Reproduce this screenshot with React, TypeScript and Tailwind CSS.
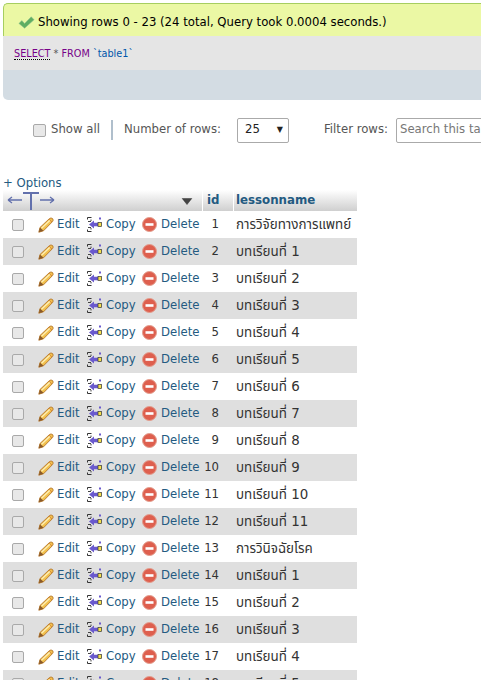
const font = { fontFamily: '"DejaVu Sans", "Noto Sans Thai", "Noto Sans", sans-serif' };

function Pencil() {
  return (
    <svg width="16" height="16" viewBox="0 0 16 16" className="shrink-0">
      <path d="M0.8 15.2 L2 10.5 L11.5 1.5 Q13 0.4 14.6 1.6 Q15.8 3.2 14.5 4.6 L5.5 13.8 Z" fill="#f2c14e" stroke="#b5762a" strokeWidth="0.9" />
      <path d="M0.8 15.2 L2 10.5 L5.5 13.8 Z" fill="#8a5a2a" />
      <path d="M3.5 11.2 L12 3.2" stroke="#fdeeb5" strokeWidth="1.3" />
      <path d="M11 2.2 L14 5" stroke="#d98a3a" strokeWidth="1" />
    </svg>
  );
}

function CopyIcon() {
  return (
    <svg width="15" height="17" viewBox="0 0 15 17" className="shrink-0">
      <path d="M4.5 1.5 H0.5 V3.5 M0.5 13.5 V15.5 H4.5" fill="none" stroke="#333" strokeWidth="1" />
      <path d="M1 5.5 H4 M1 11.5 H4 M4 3.5 V5 M4 12 V13.5" fill="none" stroke="#444" strokeWidth="1" />
      <path d="M2 8.5 L7 4.5 V6.8 H11 V10.2 H7 V12.5 Z" fill="#6a5acd" />
      <rect x="11" y="6.5" width="3.5" height="4" fill="#f5e04a" stroke="#333" strokeWidth="0.7" />
      <rect x="12" y="1.5" width="2" height="2" fill="#6a5acd" />
    </svg>
  );
}

function DeleteIcon() {
  return (
    <svg width="15" height="15" viewBox="0 0 15 15" className="shrink-0">
      <circle cx="7.5" cy="7.5" r="7" fill="#de5f4e" stroke="#e29c8c" />
      <rect x="3.5" y="6.2" width="8" height="2.6" fill="#fff" />
    </svg>
  );
}

function ColDrag() {
  return (
    <svg width="54" height="21" viewBox="0 0 54 21" className="shrink-0">
      <path d="M5 10 H19 M5 10 L9 7 M5 10 L9 13" stroke="#6270ac" strokeWidth="1.3" fill="none" />
      <path d="M20 3 H36 M28 3 V20" stroke="#6270ac" strokeWidth="2" fill="none" />
      <path d="M37 10 H51 M51 10 L47 7 M51 10 L47 13" stroke="#6270ac" strokeWidth="1.3" fill="none" />
    </svg>
  );
}

const rows: [number, string][] = [
  [1, "การวิจัยทางการแพทย์"],
  [2, "บทเรียนที่ 1"],
  [3, "บทเรียนที่ 2"],
  [4, "บทเรียนที่ 3"],
  [5, "บทเรียนที่ 4"],
  [6, "บทเรียนที่ 5"],
  [7, "บทเรียนที่ 6"],
  [8, "บทเรียนที่ 7"],
  [9, "บทเรียนที่ 8"],
  [10, "บทเรียนที่ 9"],
  [11, "บทเรียนที่ 10"],
  [12, "บทเรียนที่ 11"],
  [13, "การวินิจฉัยโรค"],
  [14, "บทเรียนที่ 1"],
  [15, "บทเรียนที่ 2"],
  [16, "บทเรียนที่ 3"],
  [17, "บทเรียนที่ 4"],
  [18, "บทเรียนที่ 5"],
];

function Row({ id, name, even }: { id: number; name: string; even: boolean }) {
  return (
    <div className={`flex h-[27px] w-[354px] items-center whitespace-nowrap pt-[1px] text-[11.7px] text-[#333] ${even ? "bg-[#dfdfdf]" : "bg-white"}`}>
      <div className="flex w-[30px] shrink-0 justify-center">
        <span className="h-[12px] w-[12px] rounded-[2px] border border-[#a9a9a9] bg-[#e8e8e8]" />
      </div>
      <span className="ml-[5px] flex w-[49px] shrink-0 items-center gap-[3px] text-[#235a81]">
        <Pencil />
        <span>Edit</span>
      </span>
      <span className="flex w-[55px] shrink-0 items-center gap-[4px] text-[#235a81]">
        <CopyIcon />
        <span>Copy</span>
      </span>
      <span className="flex w-[61px] shrink-0 items-center gap-[4px] text-[#235a81]">
        <DeleteIcon />
        <span>Delete</span>
      </span>
      <span className="w-[30px] shrink-0 pr-[14px] text-right">{id}</span>
      <span className="pl-[3px] pt-[1px] text-[13.4px]">{name}</span>
    </div>
  );
}

export default function App() {
  return (
    <div className="h-[680px] w-[481px] overflow-hidden bg-white text-[11.7px]" style={font}>
      <div className="ml-[3px] mt-[3px] w-[490px]">
        <div className="flex h-[33px] items-center rounded-t-[5px] border-l border-t border-[#a6ce5f] bg-[#ebf8a4] pl-[14px] pt-[5px] text-black">
          <svg width="17" height="15" viewBox="0 0 18 14" className="shrink-0">
            <path d="M1 8 L4 5 L7 8 L14 1 L17 4 L7 13 Z" fill="#5fae62" stroke="#8cc08d" strokeWidth="0.6" />
          </svg>
          <span className="ml-[3px] whitespace-nowrap">Showing rows 0 - 23 (24 total, Query took 0.0004 seconds.)</span>
        </div>
        <div className="h-[34px] bg-[#e5e5e5] pl-[11px] pt-[11px] text-[9.7px]">
          <span className="border-b border-dotted border-black text-[#770088]">SELECT</span>
          <span className="text-[#555]"> * </span>
          <span className="text-[#770088]">FROM</span>
          <span> </span>
          <span className="text-[#0055aa]">`table1`</span>
        </div>
        <div className="h-[30px] rounded-bl-[5px] bg-[#d3dce3]" />
      </div>

      <div className="mt-[16px] flex h-[28px] items-center whitespace-nowrap text-[#555]">
        <span className="ml-[33px] h-[13px] w-[13px] shrink-0 rounded-[2px] border border-[#a9a9a9] bg-[#e8e8e8]" />
        <span className="ml-[5px] w-[49px] shrink-0">Show all</span>
        <span className="ml-[11px] h-[20px] w-[2px] shrink-0 bg-[#b0bfcc]" />
        <span className="ml-[11px] w-[98px] shrink-0">Number of rows:</span>
        <span className="ml-[15px] flex h-[25px] w-[52px] shrink-0 items-center justify-between rounded-[2px] border border-[#aaa] pl-[7px] pr-[5px] text-[#222]">
          25
          <span className="text-[8px]">▼</span>
        </span>
        <span className="ml-[35px] w-[64px] shrink-0">Filter rows:</span>
        <span className="ml-[8px] flex h-[25px] w-[120px] shrink-0 items-center rounded-[2px] border border-[#aaa] pl-[3px] text-[#777]">Search this table</span>
      </div>

      <div className="ml-[3px] mt-[32px] h-[14px] leading-[14px] text-[#235a81]">+ Options</div>

      <div className="ml-[3px] flex h-[21px] w-[354px] bg-gradient-to-b from-white to-[#cfcfcf] text-[11.8px] font-bold text-[#235a81]">
        <div className="relative flex w-[200px] shrink-0 items-center overflow-hidden border-r border-white">
          <ColDrag />
          <svg width="12" height="7" viewBox="0 0 12 8" className="absolute right-[9px] top-[8px]">
            <path d="M0.5 0.5 H11.5 L6 7.5 Z" fill="#444" stroke="#222" strokeWidth="0.5" />
          </svg>
        </div>
        <div className="flex w-[31px] shrink-0 items-center border-r border-white pl-[4px]">id</div>
        <div className="flex flex-1 items-center pl-[2px]">lessonname</div>
      </div>

      <div className="ml-[3px]">
        {rows.map(([id, name], i) => (
          <Row key={id} id={id} name={name} even={i % 2 === 1} />
        ))}
      </div>
    </div>
  );
}
